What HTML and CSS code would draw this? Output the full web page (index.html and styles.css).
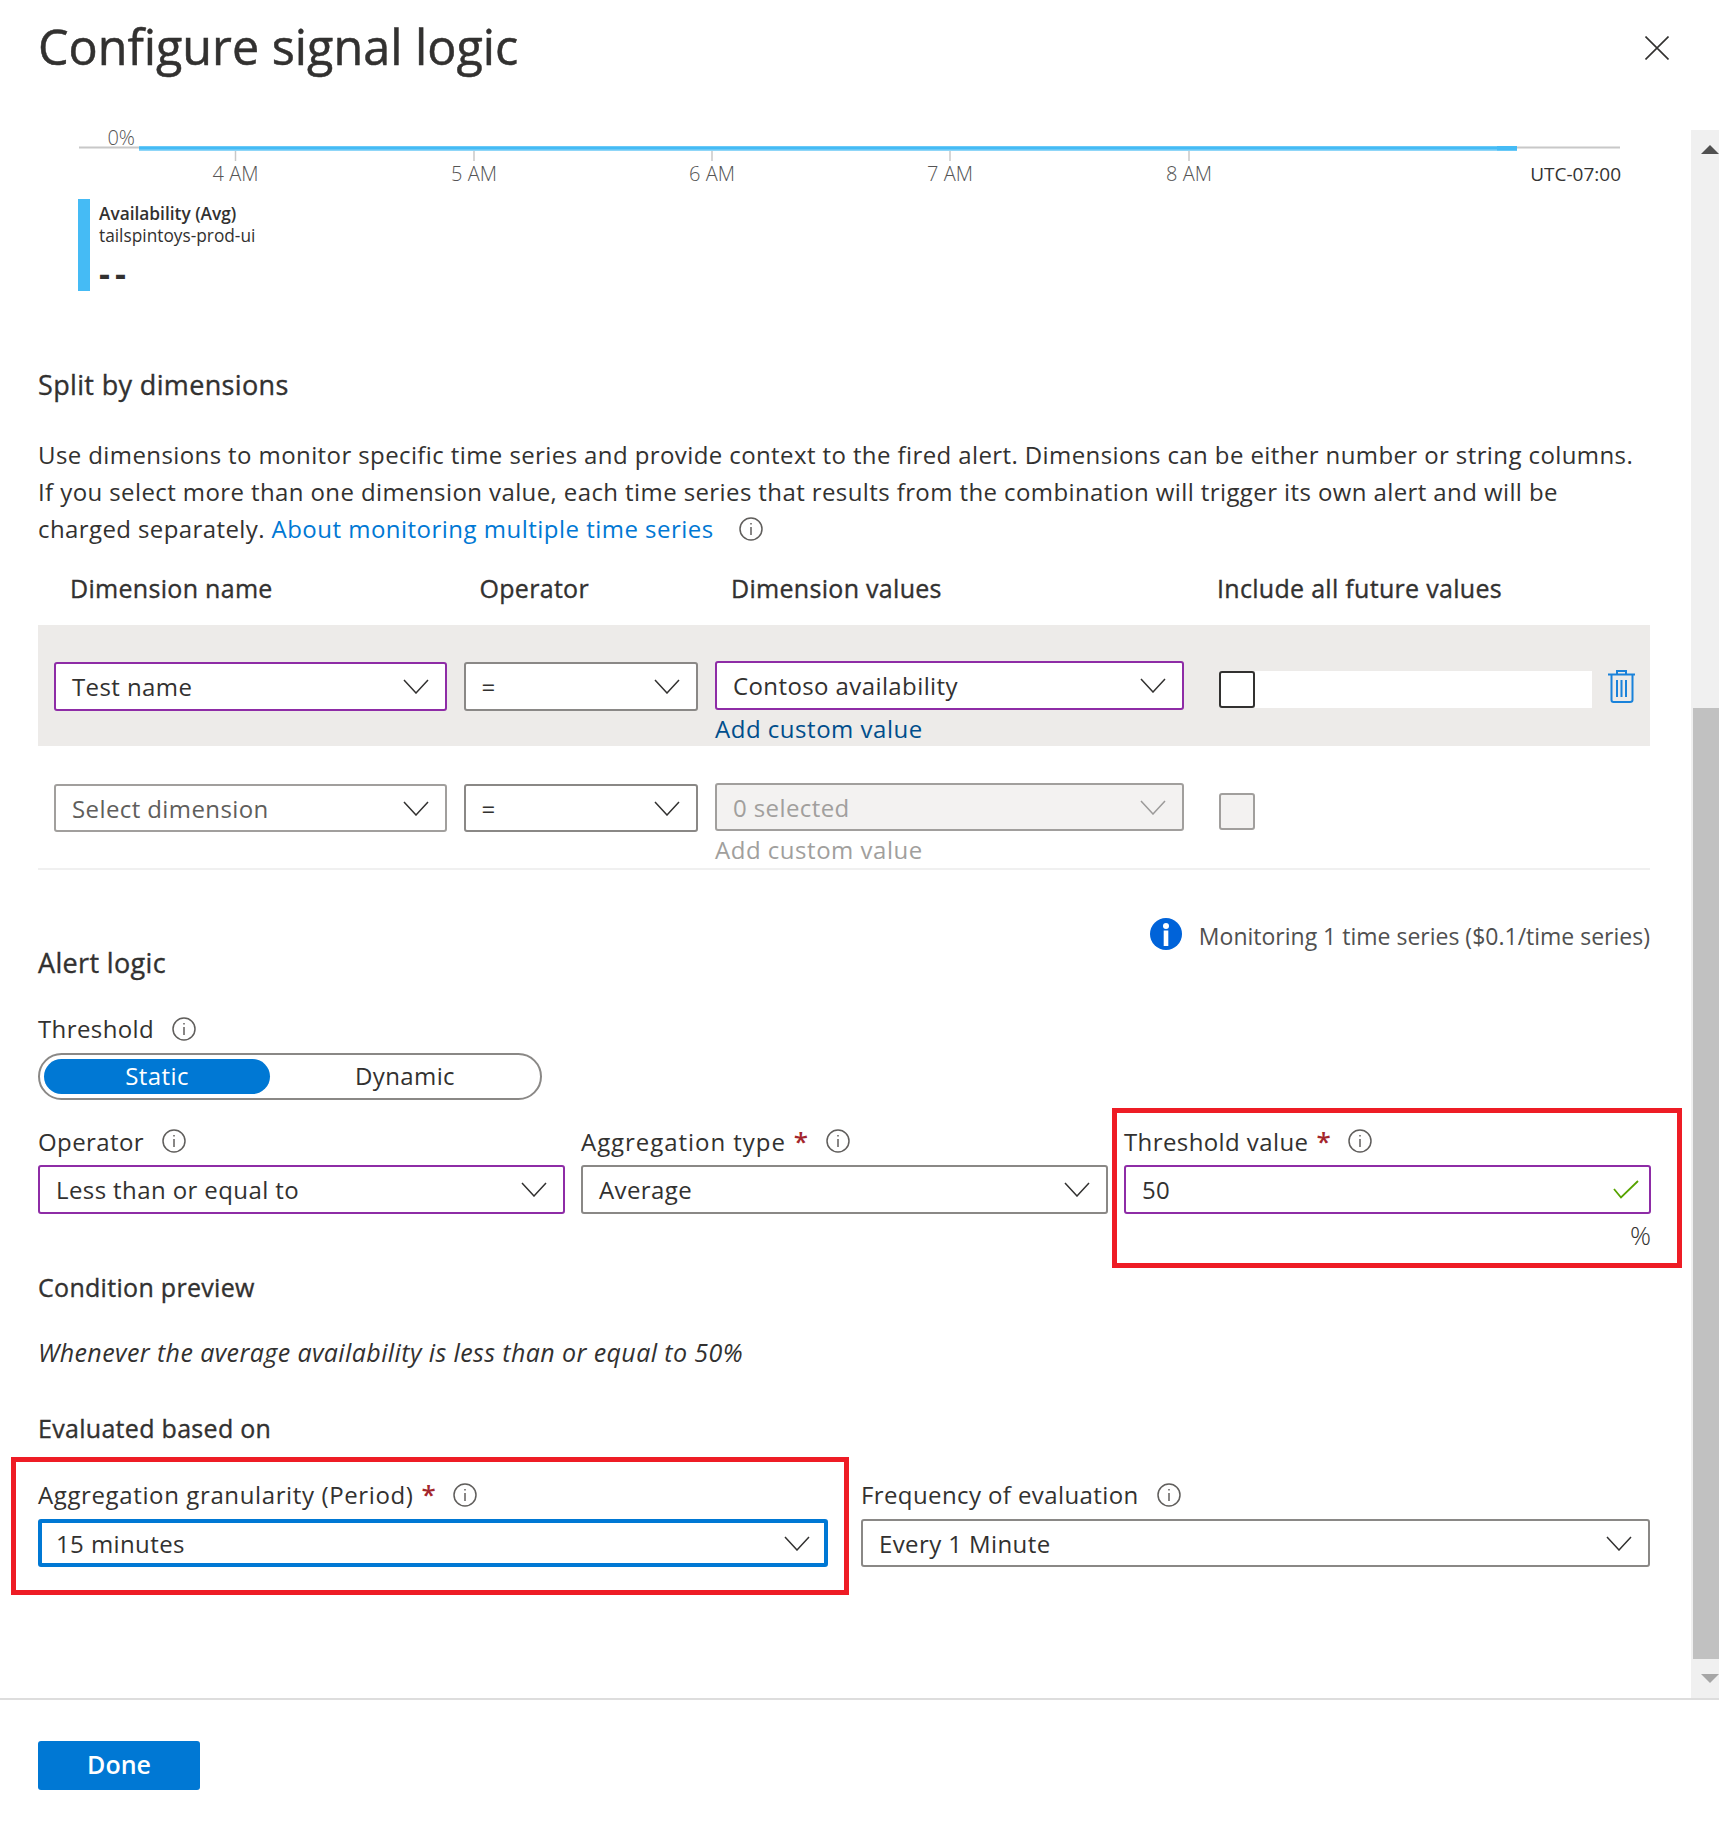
FILE: index.html
```html
<!DOCTYPE html>
<html>
<head>
    <meta charset="UTF-8">
    <title>Configure signal logic</title>
    <link rel="stylesheet" href="styles.css">
</head>
<body>
    <svg class="sprites" width="0" height="0">
        <symbol id="chev" viewBox="0 0 26 15"><polyline points="1,1 13,14 25,1"></polyline></symbol>
        <symbol id="info" viewBox="0 0 24 24">
            <circle cx="12" cy="12" r="11"></circle>
            <line x1="12" y1="10" x2="12" y2="18"></line>
            <line x1="12" y1="6" x2="12" y2="7.6"></line>
        </symbol>
    </svg>

    <div class="panel">
        <header class="head">
            <h1>Configure signal logic</h1>
            <svg class="close" width="24" height="24" viewBox="0 0 24 24"><path d="M0.5 0.5 L23.5 23.5 M23.5 0.5 L0.5 23.5"></path></svg>
        </header>

        <div class="middle">
            <main class="content">
                <!-- chart -->
                <svg class="chart" width="1612" height="70" viewBox="0 -10 1612 70">
                    <line class="axis" x1="41" y1="17.5" x2="1582" y2="17.5"></line>
                    <rect class="line-soft" x="101" y="16" width="1378" height="5"></rect>
                    <rect class="line-main" x="101" y="16.5" width="1358" height="3"></rect>
                    <rect class="line-main" x="1459" y="16" width="20" height="4.5"></rect>
                    <line class="tick" x1="197.5" y1="21" x2="197.5" y2="31"></line>
                    <line class="tick" x1="436" y1="21" x2="436" y2="31"></line>
                    <line class="tick" x1="674" y1="21" x2="674" y2="31"></line>
                    <line class="tick" x1="912" y1="21" x2="912" y2="31"></line>
                    <line class="tick" x1="1151" y1="21" x2="1151" y2="31"></line>
                    <text class="zero" x="97" y="14.5" text-anchor="end">0%</text>
                    <text class="hour" x="197.5" y="51" text-anchor="middle">4 AM</text>
                    <text class="hour" x="436" y="51" text-anchor="middle">5 AM</text>
                    <text class="hour" x="674" y="51" text-anchor="middle">6 AM</text>
                    <text class="hour" x="912" y="51" text-anchor="middle">7 AM</text>
                    <text class="hour" x="1151" y="51" text-anchor="middle">8 AM</text>
                    <text class="zone" x="1583" y="51" text-anchor="end">UTC-07:00</text>
                </svg>
                <div class="legend">
                    <div class="legend-name">Availability (Avg)</div>
                    <div class="legend-res">tailspintoys-prod-ui</div>
                    <div class="legend-val">--</div>
                </div>

                <h2 class="split-title">Split by dimensions</h2>
                <p class="intro">Use dimensions to monitor specific time series and provide context to the fired alert. Dimensions can be either number or string columns.<br>If you select more than one dimension value, each time series that results from the combination will trigger its own alert and will be<br>charged separately. <a href="#">About monitoring multiple time series</a><svg class="info info-link"><use href="#info"></use></svg></p>

                <div class="dim-grid dim-head">
                    <div>Dimension name</div>
                    <div>Operator</div>
                    <div>Dimension values</div>
                    <div>Include all future values</div>
                </div>

                <div class="dim-grid dim-row dim-active">
                    <div class="select purple"><span>Test name</span><svg class="chev"><use href="#chev"></use></svg></div>
                    <div class="select"><span>=</span><svg class="chev"><use href="#chev"></use></svg></div>
                    <div class="dim-values">
                        <div class="select purple"><span>Contoso availability</span><svg class="chev"><use href="#chev"></use></svg></div>
                        <a class="custom" href="#">Add custom value</a>
                    </div>
                    <div class="future">
                        <span class="check"></span>
                        <span class="strip"></span>
                        <svg class="trash" width="27" height="34" viewBox="0 0 27 34">
                            <path d="M0 4.5 H27 M9 4.5 V1 H18 V4.5 M3.5 4.5 V30 Q3.5 32 5.5 32 H22 Q24.5 32 24.5 30 V4.5 M9 10 V27 M13.5 10 V27 M18 10 V27"></path>
                        </svg>
                    </div>
                </div>

                <div class="dim-grid dim-row dim-last">
                    <div class="select light short"><span>Select dimension</span><svg class="chev"><use href="#chev"></use></svg></div>
                    <div class="select short"><span>=</span><svg class="chev"><use href="#chev"></use></svg></div>
                    <div class="dim-values">
                        <div class="select off short"><span>0 selected</span><svg class="chev"><use href="#chev"></use></svg></div>
                        <a class="custom custom-off" href="#">Add custom value</a>
                    </div>
                    <div class="future">
                        <span class="check check-off"></span>
                    </div>
                </div>

                <div class="alert-head">
                    <h2>Alert logic</h2>
                    <div class="note">
                        <svg width="32" height="32" viewBox="0 0 32 32">
                            <circle cx="16" cy="16" r="16" fill="#0063d9"></circle>
                            <rect x="13.7" y="12.5" width="4.6" height="15.5" fill="#fff"></rect>
                            <circle cx="16" cy="8" r="3" fill="#fff"></circle>
                        </svg>
                        <span>Monitoring 1 time series ($0.1/time series)</span>
                    </div>
                </div>

                <div class="label label-threshold">Threshold<svg class="info"><use href="#info"></use></svg></div>
                <div class="toggle">
                    <span class="toggle-on">Static</span>
                    <span class="toggle-off">Dynamic</span>
                </div>

                <div class="fields">
                    <div class="field">
                        <div class="label">Operator<svg class="info"><use href="#info"></use></svg></div>
                        <div class="select purple"><span>Less than or equal to</span><svg class="chev"><use href="#chev"></use></svg></div>
                    </div>
                    <div class="field">
                        <div class="label label-agg">Aggregation type<b class="req">*</b><svg class="info"><use href="#info"></use></svg></div>
                        <div class="select"><span>Average</span><svg class="chev"><use href="#chev"></use></svg></div>
                    </div>
                    <div class="field">
                        <div class="label">Threshold value<b class="req">*</b><svg class="info"><use href="#info"></use></svg></div>
                        <div class="select purple"><span>50</span>
                            <svg class="tick-ok" width="26" height="19" viewBox="0 0 26 19"><polyline points="1,9 8,17.5 25,1"></polyline></svg>
                        </div>
                        <div class="unit">%</div>
                        <div class="callout callout-value"></div>
                    </div>
                </div>

                <h3 class="preview-title">Condition preview</h3>
                <p class="preview">Whenever the average availability is less than or equal to 50%</p>

                <h3 class="eval-title">Evaluated based on</h3>
                <div class="fields-two">
                    <div class="field">
                        <div class="label label-period">Aggregation granularity (Period)<b class="req">*</b><svg class="info"><use href="#info"></use></svg></div>
                        <div class="select blue"><span>15 minutes</span><svg class="chev"><use href="#chev"></use></svg></div>
                        <div class="callout callout-period"></div>
                    </div>
                    <div class="field">
                        <div class="label">Frequency of evaluation<svg class="info"><use href="#info"></use></svg></div>
                        <div class="select short"><span>Every 1 Minute</span><svg class="chev"><use href="#chev"></use></svg></div>
                    </div>
                </div>
            </main>

            <div class="scrollbar">
                <div class="arrow-up"></div>
                <div class="thumb"></div>
                <div class="arrow-down"></div>
            </div>
        </div>

        <footer class="foot">
            <button class="done" type="button">Done</button>
        </footer>
    </div>
</body>
</html>
```

FILE: styles.css
```css
* {
    box-sizing: border-box;
}
html, body {
    margin: 0;
    padding: 0;
}
body {
    background-color: #ffffff;
    color: #323130;
    font-family: "Open Sans", "Noto Sans", Arial, sans-serif;
    font-size: 24px;
    letter-spacing: 0.4px;
}
.sprites {
    position: absolute;
}
symbol polyline {
    fill: none;
    stroke: #323130;
    stroke-width: 1.5;
}
symbol circle, symbol line {
    fill: none;
    stroke: #605e5c;
    stroke-width: 1.5;
}

.panel {
    width: 1719px;
    height: 1826px;
    display: flex;
    flex-direction: column;
}

/* header */
.head {
    height: 130px;
    display: flex;
    justify-content: space-between;
    align-items: flex-start;
    padding: 36px 50px 0 38px;
}
h1 {
    margin: -22px 0 0 0;
    font-size: 48.5px;
    line-height: 64px;
    font-weight: 400;
    letter-spacing: 0;
    -webkit-text-stroke: 0.5px #323130;
}
.close path {
    fill: none;
    stroke: #323130;
    stroke-width: 1.6;
}

.middle {
    height: 1568px;
    display: flex;
}
.content {
    width: 1691px;
    padding: 0 41px 0 38px;
}

/* chart */
.chart {
    display: block;
    margin-top: -10px;
}
.axis {
    stroke: #c8c8c8;
    stroke-width: 2;
}
.line-soft {
    fill: #8fd6f8;
}
.line-main {
    fill: #45bbf5;
}
.tick {
    stroke: #c8c8c8;
    stroke-width: 1.5;
}
.zero, .hour {
    font-size: 20px;
    font-weight: 300;
    fill: #555555;
    letter-spacing: 0;
}
.zone {
    font-size: 19px;
    fill: #333333;
    font-weight: 400;
    letter-spacing: 0;
}
.legend {
    margin: 9px 0 0 40px;
    height: 92px;
    border-left: 12px solid #45bbf5;
    padding: 4px 0 0 9px;
    font-size: 17.3px;
    line-height: 22px;
    letter-spacing: 0;
}
.legend-name {
    font-weight: 600;
}
.legend-val {
    margin-top: 12px;
    font-size: 34px;
    line-height: 28px;
    font-weight: 700;
    letter-spacing: 5px;
}

/* dimensions */
h2, h3 {
    margin: 0;
    line-height: 34px;
    font-weight: 400;
    -webkit-text-stroke: 0.35px #323130;
}
h2 {
    font-size: 27px;
    letter-spacing: 0.35px;
}
h3 {
    font-size: 25px;
    letter-spacing: 0.3px;
}
.split-title {
    margin-top: 77px;
}
.intro {
    margin: 34px 0 0 0;
    line-height: 37px;
    white-space: nowrap;
}
a {
    color: #0078d4;
    text-decoration: none;
}
.intro a {
    letter-spacing: 0.48px;
}
.info {
    width: 24px;
    height: 24px;
    margin-left: 18px;
    vertical-align: -3px;
}
.info-link {
    margin-left: 25px;
}
.dim-grid {
    display: grid;
    grid-template-columns: 392.5px 234.5px 469px 1fr;
    column-gap: 17px;
    padding-left: 16px;
}
.dim-head {
    margin-top: 24px;
    margin-bottom: 20px;
    line-height: 34px;
    font-size: 25px;
    letter-spacing: 0.3px;
    -webkit-text-stroke: 0.35px #323130;
}
.dim-head div {
    padding-left: 16px;
}
.dim-row {
    align-items: start;
}
.dim-active {
    height: 121px;
    padding-top: 37px;
    background-color: #edebe9;
}
.dim-last {
    height: 124px;
    padding-top: 38px;
    border-bottom: 2px solid #f0f0f0;
}
.dim-values {
    margin-top: -1px;
}
.custom {
    display: block;
    margin-top: 3px;
    line-height: 32px;
    letter-spacing: 0.52px;
    color: #004e8c;
}
.custom-off {
    color: #a19f9d;
}
.future {
    display: flex;
    align-items: flex-start;
    padding: 9px 0 0 18px;
}
.check {
    width: 36px;
    height: 37px;
    border: 2px solid #323130;
    border-radius: 3px;
    background-color: #ffffff;
}
.check-off {
    border-color: #a19f9d;
    background-color: #f3f2f1;
}
.strip {
    width: 337px;
    height: 37px;
    background-color: #ffffff;
}
.trash {
    margin: -1px 0 0 16px;
}
.trash path {
    fill: none;
    stroke: #1a82da;
    stroke-width: 2;
}

/* select box */
.select {
    height: 49px;
    display: flex;
    align-items: center;
    justify-content: space-between;
    padding: 0 16px 0 16px;
    border: 2px solid #8a8886;
    border-radius: 3px;
    background-color: #ffffff;
}
.purple {
    border-color: #8e2ca6;
}
.light {
    border-color: #a19f9d;
    color: #605e5c;
}
.off {
    border-color: #a19f9d;
    background-color: #f3f2f1;
    color: #a19f9d;
}
.blue {
    border: 4px solid #0078d4;
    padding: 0 14px 0 14px;
    height: 48px;
}
.short {
    height: 48px;
}
.chev {
    width: 26px;
    height: 15px;
}
.off .chev {
    opacity: 0.45;
}
.tick-ok polyline {
    fill: none;
    stroke: #57a300;
    stroke-width: 1.8;
}
.tick-ok {
    margin-right: -6px;
}

/* alert logic */
.alert-head {
    margin-top: 48px;
    height: 62px;
    display: flex;
    justify-content: space-between;
    align-items: flex-end;
}
.note {
    align-self: flex-start;
    display: flex;
    align-items: center;
    gap: 17px;
    font-size: 23px;
    letter-spacing: 0;
    color: #505050;
}
.note span {
    position: relative;
    top: 2px;
}
.label {
    line-height: 34px;
}
.label-threshold {
    margin-top: 32px;
}
.label-agg {
    letter-spacing: 0.95px;
}
.label-period {
    letter-spacing: 0.62px;
}
.req {
    margin-left: 8px;
    color: #a4262c;
    font-size: 26px;
    line-height: 0;
    font-weight: 600;
}
.req + .info {
    margin-left: 17px;
}
.toggle {
    margin-top: 7px;
    width: 504px;
    height: 47px;
    border: 2px solid #8a8886;
    border-radius: 24px;
    padding: 4px;
    display: flex;
    align-items: center;
}
.toggle span {
    flex: none;
    text-align: center;
    height: 35px;
    line-height: 34px;
}
.toggle-on {
    width: 226px;
    background-color: #0078d4;
    color: #ffffff;
    border-radius: 18px;
}
.toggle-off {
    width: 270px;
}
.fields {
    margin-top: 26px;
    display: grid;
    grid-template-columns: 527px 527px 527px;
    column-gap: 16px;
}
.fields .info {
    vertical-align: -2px;
}
.fields .label {
    margin-top: -1px;
    margin-bottom: 6px;
}
.field {
    position: relative;
}
.unit {
    margin-top: 6px;
    line-height: 30px;
    font-size: 26px;
    font-weight: 300;
    letter-spacing: 0;
    text-align: right;
}
.callout {
    position: absolute;
    border: 5px solid #ee1c25;
    pointer-events: none;
}
.callout-value {
    left: -12px;
    right: -31px;
    top: -18px;
    bottom: -18px;
}
.callout-period {
    left: -27px;
    right: -21px;
    top: -21px;
    bottom: -28px;
}
.preview-title {
    margin-top: 20px;
}
.preview {
    margin: 31px 0 0 0;
    line-height: 34px;
    font-size: 25px;
    font-style: italic;
    letter-spacing: 0.4px;
}
.eval-title {
    margin-top: 42px;
}
.fields-two {
    margin-top: 33px;
    display: grid;
    grid-template-columns: 790px 789px;
    column-gap: 33px;
}
.fields-two .label {
    margin-bottom: 7px;
}

/* scrollbar */
.scrollbar {
    width: 28px;
    background-color: #f0f0f0;
    display: flex;
    flex-direction: column;
    align-items: flex-end;
}
.arrow-up {
    margin: 15px 0 0 0;
    width: 18px;
    height: 9px;
    border-left: 9px solid transparent;
    border-right: 9px solid transparent;
    border-bottom: 9px solid #505050;
}
.thumb {
    margin-top: 554px;
    width: 26px;
    height: 951px;
    background-color: #c1c1c1;
}
.arrow-down {
    margin-top: 15px;
    width: 18px;
    height: 9px;
    border-left: 9px solid transparent;
    border-right: 9px solid transparent;
    border-top: 9px solid #a6a6a6;
}

/* footer */
.foot {
    height: 128px;
    border-top: 2px solid #dddddd;
    padding: 41px 0 0 38px;
}
.done {
    width: 162px;
    height: 49px;
    border: 0;
    border-radius: 3px;
    padding: 0 0 3px 0;
    background-color: #0078d4;
    color: #ffffff;
    font-family: "Open Sans", "Noto Sans", Arial, sans-serif;
    font-size: 25px;
    font-weight: 600;
}
```
